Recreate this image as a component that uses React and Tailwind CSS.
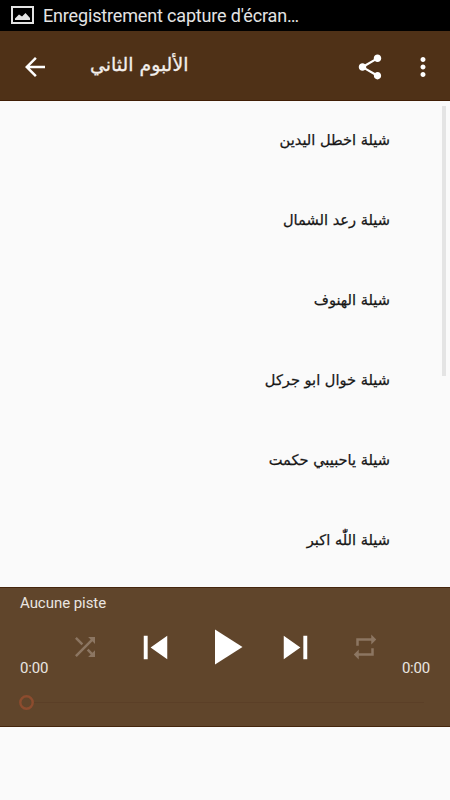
const tracks = [
  'شيلة اخطل اليدين',
  'شيلة رعد الشمال',
  'شيلة الهنوف',
  'شيلة خوال ابو جركل',
  'شيلة ياحبيبي حكمت',
  'شيلة اللّٰه اكبر',
];

const paths = {
  back: 'M20 11H7.83l5.59-5.59L12 4l-8 8 8 8 1.41-1.41L7.83 13H20v-2z',
  share:
    'M18 16.08c-.76 0-1.44.3-1.96.77L8.91 12.7c.05-.23.09-.46.09-.7s-.04-.47-.09-.7l7.05-4.11c.54.5 1.25.81 2.04.81 1.66 0 3-1.34 3-3s-1.34-3-3-3-3 1.34-3 3c0 .24.04.47.09.7L8.04 9.81C7.5 9.31 6.79 9 6 9c-1.66 0-3 1.34-3 3s1.34 3 3 3c.79 0 1.5-.31 2.04-.81l7.12 4.16c-.05.21-.08.43-.08.65 0 1.61 1.31 2.92 2.92 2.92s2.92-1.31 2.92-2.92-1.31-2.92-2.92-2.92z',
  more: 'M12 8c1.1 0 2-.9 2-2s-.9-2-2-2-2 .9-2 2 .9 2 2 2zm0 2c-1.1 0-2 .9-2 2s.9 2 2 2 2-.9 2-2-.9-2-2-2zm0 6c-1.1 0-2 .9-2 2s.9 2 2 2 2-.9 2-2-.9-2-2-2z',
  shuffle:
    'M10.59 9.17L5.41 4 4 5.41l5.17 5.17 1.42-1.41zM14.5 4l2.04 2.04L4 18.59 5.41 20 17.96 7.46 20 9.5V4h-5.5zm.33 9.41l-1.41 1.41 3.13 3.13L14.5 20H20v-5.5l-2.04 2.04-3.13-3.13z',
  previous: 'M6 6h2v12H6zm3.5 6l8.5 6V6z',
  play: 'M8 5v14l11-7z',
  next: 'M6 18l8.5-6L6 6v12zM16 6v12h2V6h-2z',
  repeat: 'M7 7h10v3l4-4-4-4v3H5v6h2V7zm10 10H7v-3l-4 4 4 4v-3h12v-6h-2v4z',
};

function Icon({ name, className }) {
  return (
    <svg viewBox="0 0 24 24" fill="currentColor" className={className}>
      <path d={paths[name]} />
    </svg>
  );
}

function StatusBar() {
  return (
    <div className="flex h-[31px] items-center bg-black pl-[11px] text-[#e4e4e4]">
      <svg viewBox="0 0 23 18" className="-mt-px h-[18px] w-[23px]">
        <rect x="1" y="1" width="21" height="16" fill="none" stroke="currentColor" strokeWidth="2" />
        <path d="M4 14v-1.500l4-4 3 2 3.500-3.500L19 12v2z" fill="currentColor" />
      </svg>
      <span className="ml-[9px] whitespace-nowrap text-[18px] leading-[31px] tracking-[-0.16px]">
        Enregistrement capture d'écran…
      </span>
    </div>
  );
}

function AppBar() {
  return (
    <header className="flex h-[70px] items-center border-b border-[#401e05] bg-[#4f3117] pl-5 pr-3 pt-0.5 text-white">
      <button aria-label="Retour">
        <Icon name="back" className="size-[30px]" />
      </button>
      <h1
        dir="rtl"
        className="mb-1.5 ml-10 font-['DejaVu_Sans',sans-serif] text-[18.9px] leading-6 text-[#f3efec] [-webkit-text-stroke:0.3px]"
      >
        الألبوم الثاني
      </h1>
      <button aria-label="Partager" className="ml-auto">
        <Icon name="share" className="size-[30px]" />
      </button>
      <button aria-label="Plus" className="ml-[23px]">
        <Icon name="more" className="size-[30px]" />
      </button>
    </header>
  );
}

function TrackList() {
  return (
    <main className="flex h-[486px] justify-between overflow-hidden">
      <ul className="-mt-px grow" dir="rtl">
        {tracks.map((track) => (
          <li
            key={track}
            className="flex h-20 items-center pr-[52px] font-['DejaVu_Sans',sans-serif] text-[14.6px] text-[#161616] [-webkit-text-stroke:0.25px]"
          >
            {track}
          </li>
        ))}
      </ul>
      <div className="mr-1 mt-[5px] h-[270px] w-1 bg-[#e4e4e4]" />
    </main>
  );
}

function Player() {
  return (
    <footer className="h-[140px] border-y border-[#45260d] bg-[#60452b] px-5 text-[15px] text-[#eae5e1]">
      <p className="pt-1 leading-[22px] tracking-[-0.05px]">Aucune piste</p>
      <div className="flex h-[66px] items-center">
        <span className="mt-[42px] w-[30px] leading-5 tracking-[-0.2px]">0:00</span>
        <div className="grid flex-1 grid-cols-5 place-items-center text-white">
          <Icon name="shuffle" className="size-[30px] text-[#8c7662]" />
          <Icon name="previous" className="size-[47px]" />
          <Icon name="play" className="size-[60px]" />
          <Icon name="next" className="size-[47px]" />
          <Icon name="repeat" className="size-[30px] text-[#8c7662]" />
        </div>
        <span className="mt-[42px] w-[30px] text-right leading-5 tracking-[-0.2px]">0:00</span>
      </div>
      <div className="-ml-px mt-[14px] flex h-4 items-center">
        <svg viewBox="0 0 15 15" className="size-[15px]">
          <circle cx="7.5" cy="7.5" r="6.2" fill="none" stroke="#8d4c2e" strokeWidth="2.4" />
        </svg>
        <div className="mr-[6px] h-px flex-1 bg-[#5b3f27]" />
      </div>
    </footer>
  );
}

export default function App() {
  return (
    <div className="h-[800px] w-[450px] overflow-hidden bg-[#fafafa] font-['Roboto',sans-serif]">
      <StatusBar />
      <AppBar />
      <TrackList />
      <Player />
    </div>
  );
}
